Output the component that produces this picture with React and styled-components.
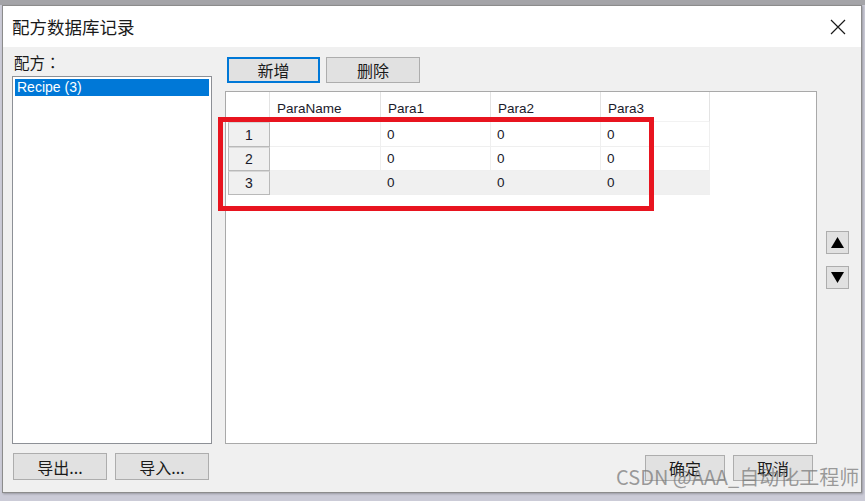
import React from "react";
import styled, { createGlobalStyle } from "styled-components";

const Global = createGlobalStyle`
  html, body { margin: 0; padding: 0; }
  body {
    width: 865px;
    height: 501px;
    overflow: hidden;
    background: linear-gradient(#a4a4a8 0, #a4a4a8 5px, #cbcbd7 5px);
    font-family: "Noto Sans CJK SC", "Liberation Sans", sans-serif;
  }
`;

const Window = styled.div`
  position: relative;
  margin: 5px 0 0 2px;
  width: 858px;
  height: 486px;
  border: 1px solid #8c8c8c;
  background: #f0f0f0;
  display: flex;
  flex-direction: column;
  box-shadow: 1px 1px 2px rgba(0,0,0,0.25);
`;

const TitleBar = styled.div`
  height: 41px;
  background: #ffffff;
  display: flex;
  align-items: center;
  justify-content: space-between;
  padding: 0 15px 0 9px;
  flex-shrink: 0;
`;

const Title = styled.div`
  font-size: 17.5px;
  color: #1a1a1a;
`;

const Body = styled.div`
  flex: 1;
  display: flex;
  padding-left: 9px;
`;

const LeftCol = styled.div`
  width: 200px;
  display: flex;
  flex-direction: column;
`;

const Label = styled.div`
  height: 29px;
  display: flex;
  align-items: center;
  padding-left: 2px;
  font-family: "Noto Sans CJK TC", "Noto Sans CJK SC", sans-serif;
  font-size: 15.5px;
  color: #1a1a1a;
`;

const ListBox = styled.div`
  height: 368px;
  box-sizing: border-box;
  background: #fff;
  border: 1px solid #8d9096;
  padding: 2px;
`;

const ListItem = styled.div`
  height: 17px;
  line-height: 17px;
  padding-left: 2px;
  font-family: "Liberation Sans", sans-serif;
  font-size: 14px;
  color: ${(p) => (p.$selected ? "#fff" : "#1a1a1a")};
  background: ${(p) => (p.$selected ? "#0078d7" : "transparent")};
`;

const ButtonRow = styled.div`
  display: flex;
  gap: ${(p) => p.$gap || 8}px;
  justify-content: ${(p) => p.$justify || "flex-start"};
  padding: ${(p) => p.$pad || "0"};
  margin-top: ${(p) => p.$mt || 0}px;
`;

const Button = styled.button`
  box-sizing: border-box;
  width: ${(p) => p.$w}px;
  height: ${(p) => p.$h || 27}px;
  background: #e1e1e1;
  border: 1px solid ${(p) => (p.$focus ? "#0078d7" : "#adadad")};
  box-shadow: ${(p) => (p.$focus ? "inset 0 0 0 1px #0078d7" : "none")};
  font-family: "Noto Sans CJK SC", sans-serif;
  font-size: 16px;
  color: #1a1a1a;
  padding: 0;
  display: flex;
  align-items: center;
  justify-content: center;
`;

const MidCol = styled.div`
  margin-left: 13px;
  width: 592px;
  display: flex;
  flex-direction: column;
`;

const Panel = styled.div`
  position: relative;
  margin-top: 8px;
  height: 353px;
  box-sizing: border-box;
  background: #fff;
  border: 1px solid #a9a9a9;
`;

const Grid = styled.div`
  display: grid;
  grid-template-columns: 44px 111px 110px 110px 109px;
  grid-template-rows: 30px 25px 24px 24px;
  width: 484px;
  font-family: "Liberation Sans", sans-serif;
  font-size: 13.5px;
  color: #1a1a2a;
`;

const HeadCell = styled.div`
  box-sizing: border-box;
  border-right: 1px solid #e3e3e3;
  border-bottom: 1px solid #f2f2f2;
  padding: 9px 0 0 7px;
  background: #fff;
`;

const RowHead = styled.div`
  box-sizing: border-box;
  margin-left: 2px;
  background: #f0f0f0;
  border: 1px solid #b9b9b9;
  border-top-color: #d6d6d6;
  display: flex;
  align-items: center;
  justify-content: center;
  font-size: 14px;
`;

const Cell = styled.div`
  box-sizing: border-box;
  background: ${(p) => (p.$alt ? "#f0f0f0" : "#fff")};
  border-right: 1px solid ${(p) => (p.$alt ? "#f0f0f0" : "#efefef")};
  border-bottom: 1px solid #efefef;
  display: flex;
  align-items: center;
  padding-left: 6px;
`;

const Highlight = styled.div`
  position: absolute;
  left: -8px;
  top: 25px;
  width: 436px;
  height: 94px;
  box-sizing: border-box;
  border: 5px solid #e8141f;
  pointer-events: none;
`;

const RightCol = styled.div`
  margin-left: 9px;
  display: flex;
  flex-direction: column;
  gap: 12px;
  padding-top: 184px;
`;

const ArrowBtn = styled.button`
  width: 23px;
  height: 23px;
  box-sizing: border-box;
  background: #e1e1e1;
  border: 1px solid #adadad;
  padding: 0;
  display: flex;
  align-items: center;
  justify-content: center;
`;

const Watermark = styled.div`
  position: absolute;
  left: 613px;
  top: 458px;
  line-height: 26px;
  font-family: "Noto Sans CJK SC", sans-serif;
  font-size: 20px;
  color: rgba(120, 120, 120, 0.72);
  white-space: nowrap;
  pointer-events: none;
`;

const rows = [1, 2, 3];
const cols = ["ParaName", "Para1", "Para2", "Para3"];

export default function App() {
  return (
    <>
      <Global />
      <Window>
        <TitleBar>
          <Title>配方数据库记录</Title>
          <svg width="16" height="16" viewBox="0 0 16 16">
            <path d="M1 1 L15 15 M15 1 L1 15" stroke="#1a1a1a" strokeWidth="1.2" fill="none" />
          </svg>
        </TitleBar>
        <Body>
          <LeftCol>
            <Label>配方：</Label>
            <ListBox>
              <ListItem $selected>Recipe (3)</ListItem>
            </ListBox>
            <ButtonRow $mt={9} $pad="0 0 0 1px">
              <Button $w={94}>导出...</Button>
              <Button $w={94}>导入...</Button>
            </ButtonRow>
          </LeftCol>
          <MidCol>
            <ButtonRow $mt={10} $pad="0 0 0 2px" $gap={6}>
              <Button $w={93} $h={26} $focus>新增</Button>
              <Button $w={94} $h={26}>删除</Button>
            </ButtonRow>
            <Panel>
              <Grid>
                <HeadCell />
                {cols.map((c) => (
                  <HeadCell key={c}>{c}</HeadCell>
                ))}
                {rows.map((r) => (
                  <React.Fragment key={r}>
                    <RowHead>{r}</RowHead>
                    <Cell $alt={r === 3} />
                    <Cell $alt={r === 3}>0</Cell>
                    <Cell $alt={r === 3}>0</Cell>
                    <Cell $alt={r === 3}>0</Cell>
                  </React.Fragment>
                ))}
              </Grid>
              <Highlight />
            </Panel>
            <ButtonRow $mt={11} $justify="flex-end" $pad="0 4px 0 0">
              <Button $w={80} $h={26}>确定</Button>
              <Button $w={80} $h={26}>取消</Button>
            </ButtonRow>
          </MidCol>
          <RightCol>
            <ArrowBtn>
              <svg width="13" height="11" viewBox="0 0 13 11"><path d="M6.5 0 L13 11 L0 11 Z" fill="#000" /></svg>
            </ArrowBtn>
            <ArrowBtn>
              <svg width="13" height="11" viewBox="0 0 13 11"><path d="M0 0 L13 0 L6.5 11 Z" fill="#000" /></svg>
            </ArrowBtn>
          </RightCol>
        </Body>
        <Watermark>CSDN @AAA_自动化工程师</Watermark>
      </Window>
    </>
  );
}
